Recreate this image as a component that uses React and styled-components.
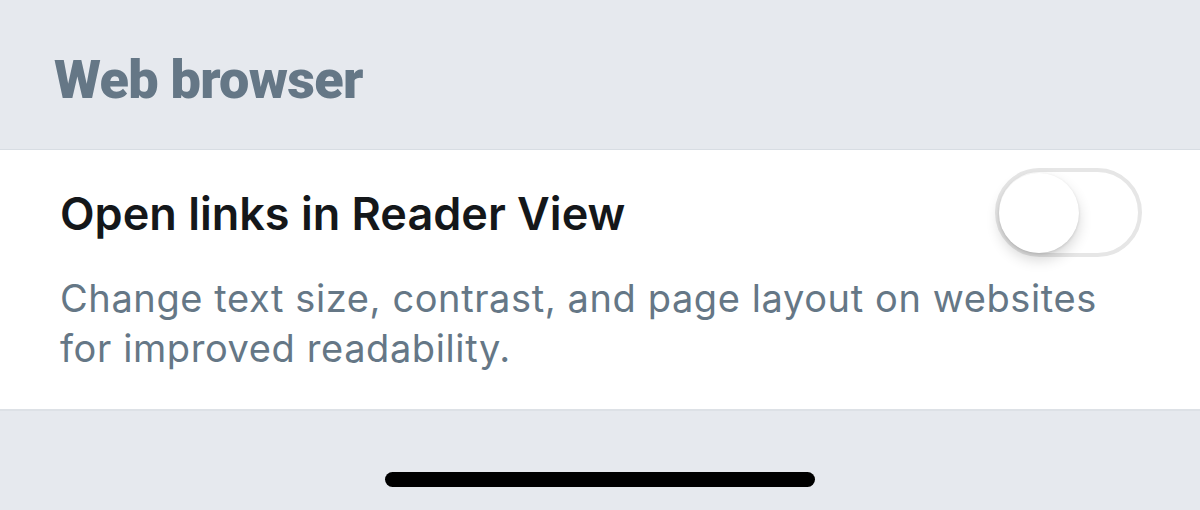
import React from "react";
import styled, { createGlobalStyle } from "styled-components";

const GlobalStyle = createGlobalStyle`
  html, body {
    margin: 0;
    padding: 0;
    background: #e6e9ee;
  }
  body {
    font-family: Inter, "Noto Sans", sans-serif;
    -webkit-font-smoothing: antialiased;
  }
`;

const Screen = styled.div`
  width: 1200px;
  height: 510px;
  background: #e6e9ee;
  display: flex;
  flex-direction: column;
  overflow: hidden;
`;

const SectionHeader = styled.h2`
  margin: 0;
  height: 150px;
  box-sizing: border-box;
  padding: 48px 0 0 54px;
  font-family: Roboto, Inter, sans-serif;
  font-size: 54px;
  font-weight: 900;
  letter-spacing: -0.7px;
  color: #657786;
  border-bottom: 1px solid #d8dde3;
`;

const Card = styled.div`
  background: #ffffff;
  height: 261px;
  box-sizing: border-box;
  padding: 18px 58px 0 60px;
  border-bottom: 2px solid #dde1e6;
`;

const Row = styled.div`
  display: flex;
  align-items: center;
  justify-content: space-between;
`;

const Title = styled.div`
  font-size: 45px;
  font-weight: 600;
  color: #14171a;
  padding-top: 2px;
`;

const Description = styled.p`
  margin: 16px 0 0;
  font-size: 38px;
  line-height: 50px;
  font-weight: 400;
  letter-spacing: 0.6px;
  color: #657786;
`;

const Track = styled.div`
  width: 147px;
  height: 89px;
  box-sizing: border-box;
  border-radius: 45px;
  border: 4px solid #e6e6e6;
  background: #ffffff;
  display: flex;
  align-items: center;
  justify-content: ${(p) => (p.$on ? "flex-end" : "flex-start")};
`;

const Knob = styled.div`
  width: 80px;
  height: 80px;
  border-radius: 50%;
  background: #ffffff;
  box-shadow: 0 7px 14px rgba(0, 0, 0, 0.16), 0 1px 3px rgba(0, 0, 0, 0.12);
`;

const Footer = styled.div`
  flex: 1;
  display: flex;
  justify-content: center;
  padding-top: 61px;
`;

const HomeBar = styled.div`
  width: 430px;
  height: 15px;
  border-radius: 8px;
  background: #000000;
`;

const Toggle = ({ on }) => (
  <Track $on={on}>
    <Knob />
  </Track>
);

export default function App() {
  return (
    <Screen>
      <GlobalStyle />
      <SectionHeader>Web browser</SectionHeader>
      <Card>
        <Row>
          <Title>Open links in Reader View</Title>
          <Toggle on={false} />
        </Row>
        <Description>
          Change text size, contrast, and page layout on websites
          <br />
          for improved readability.
        </Description>
      </Card>
      <Footer>
        <HomeBar />
      </Footer>
    </Screen>
  );
}
